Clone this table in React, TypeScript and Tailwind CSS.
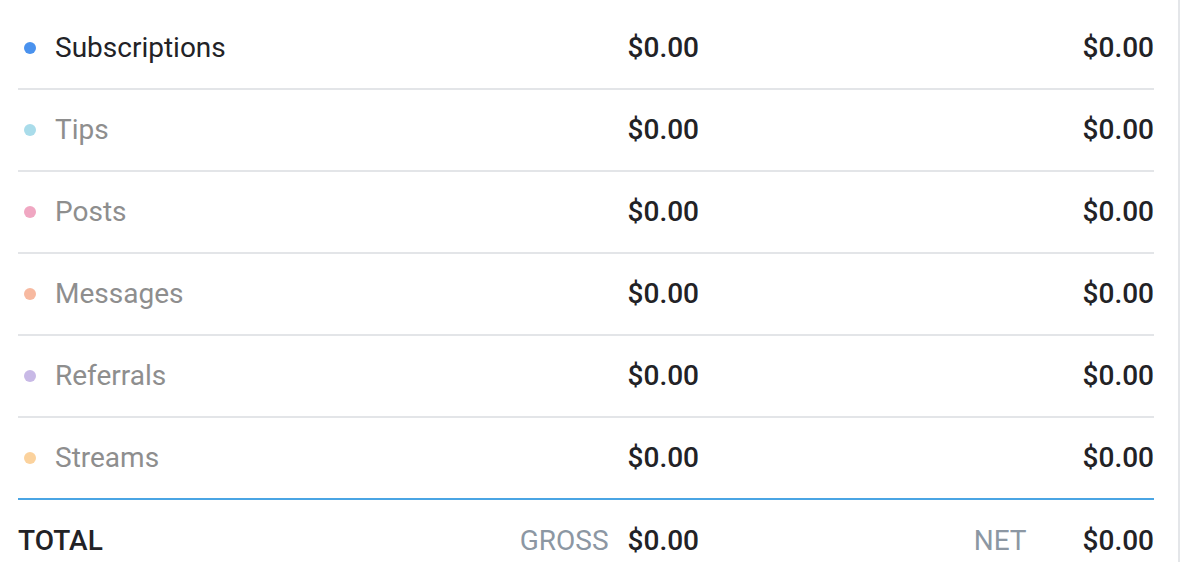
const rows = [
  { label: 'Subscriptions', dot: 'bg-[#4a92ee]', active: true },
  { label: 'Tips', dot: 'bg-[#a9dcea]', active: false },
  { label: 'Posts', dot: 'bg-[#f0a7c2]', active: false },
  { label: 'Messages', dot: 'bg-[#f7b9a0]', active: false },
  { label: 'Referrals', dot: 'bg-[#c8b9e6]', active: false },
  { label: 'Streams', dot: 'bg-[#fbd29d]', active: false },
];

export default function App() {
  return (
    <div className="w-[1184px] h-[562px] overflow-hidden bg-white font-['Roboto',sans-serif]">
      <div className="w-[1180px] h-full border-r-2 border-[#e4e6e9] pl-[18px] pr-[24px] pt-[8px]">
        {rows.map((row) => (
          <div key={row.label} className="flex items-center h-[82px] border-b-2 border-[#e3e5e8]">
            <div className="flex flex-1 items-center">
              <span className={`ml-[6px] w-3 h-3 rounded-full ${row.dot}`} />
              <span
                className={`ml-[19px] text-[28px] ${
                  row.active ? 'text-[#222226]' : 'text-[#8e8e8e]'
                }`}
              >
                {row.label}
              </span>
            </div>
            <div className="w-[100px] text-right text-[28px] font-medium text-[#222226]">$0.00</div>
            <div className="w-[455px] text-right text-[28px] font-medium text-[#222226]">$0.00</div>
          </div>
        ))}
        <div className="flex items-center h-[84px] border-t-2 border-[#4aa5e4] -mt-[2px]">
          <div className="flex-1 text-[28px] font-medium text-[#222226]">TOTAL</div>
          <div className="flex items-center justify-end">
            <div className="text-[28px] text-[#8c97a3] mr-[19px]">GROSS</div>
            <div className="text-[28px] font-medium text-[#222226]">$0.00</div>
          </div>
          <div className="w-[455px] flex items-center justify-end">
            <div className="text-[28px] text-[#8c97a3] mr-[56px]">NET</div>
            <div className="text-[28px] font-medium text-[#222226]">$0.00</div>
          </div>
        </div>
      </div>
    </div>
  );
}
